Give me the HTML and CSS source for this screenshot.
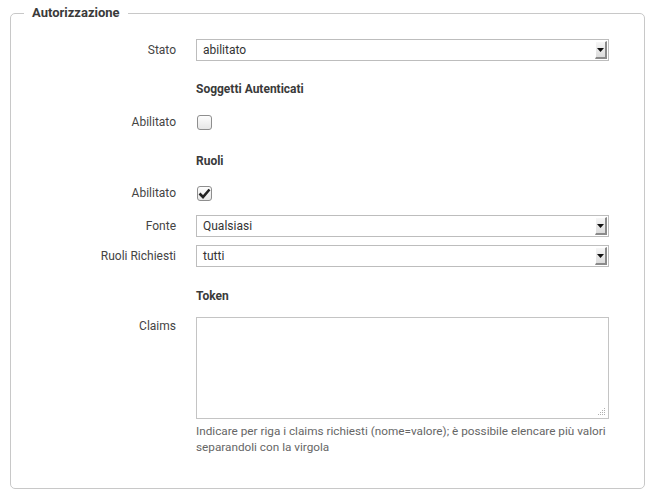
FILE: index.html
```html
<!DOCTYPE html>
<html lang="it">
<head>
<meta charset="utf-8">
<title>Autorizzazione</title>
<link rel="stylesheet" href="styles.css">
</head>
<body>
<fieldset class="box">
  <legend class="box-title">Autorizzazione</legend>

  <div class="row row-stato">
    <label class="lbl">Stato</label>
    <div class="select"><span class="select-value">abilitato</span><span class="select-btn"><svg width="7" height="4" viewBox="0 0 7 4"><path d="M0 0h7L3.5 4z" fill="#111"/></svg></span></div>
  </div>

  <div class="row row-head1">
    <span class="lbl"></span>
    <span class="section">Soggetti Autenticati</span>
  </div>

  <div class="row row-check1">
    <label class="lbl">Abilitato</label>
    <span class="check"></span>
  </div>

  <div class="row row-head2">
    <span class="lbl"></span>
    <span class="section">Ruoli</span>
  </div>

  <div class="row row-check2">
    <label class="lbl">Abilitato</label>
    <span class="check"><svg width="13" height="11" viewBox="0 0 13 11"><path d="M1.5 5.5 L5 9 L11.5 1.5" fill="none" stroke="#222" stroke-width="2.6"/></svg></span>
  </div>

  <div class="row row-fonte">
    <label class="lbl">Fonte</label>
    <div class="select"><span class="select-value">Qualsiasi</span><span class="select-btn"><svg width="7" height="4" viewBox="0 0 7 4"><path d="M0 0h7L3.5 4z" fill="#111"/></svg></span></div>
  </div>

  <div class="row row-ruoli">
    <label class="lbl">Ruoli Richiesti</label>
    <div class="select"><span class="select-value">tutti</span><span class="select-btn"><svg width="7" height="4" viewBox="0 0 7 4"><path d="M0 0h7L3.5 4z" fill="#111"/></svg></span></div>
  </div>

  <div class="row row-head3">
    <span class="lbl"></span>
    <span class="section">Token</span>
  </div>

  <div class="row row-claims">
    <label class="lbl lbl-top">Claims</label>
    <div class="field">
      <div class="area-wrap">
        <textarea class="area"></textarea>
        <svg class="grip" width="8" height="8" viewBox="0 0 8 8"><g fill="#b0b0b0"><rect x="6" y="0" width="1" height="1"/><rect x="4" y="2" width="1" height="1"/><rect x="6" y="2" width="1" height="1"/><rect x="2" y="4" width="1" height="1"/><rect x="4" y="4" width="1" height="1"/><rect x="6" y="4" width="1" height="1"/><rect x="0" y="6" width="1" height="1"/><rect x="2" y="6" width="1" height="1"/><rect x="4" y="6" width="1" height="1"/><rect x="6" y="6" width="1" height="1"/></g></svg>
      </div>
      <p class="help">Indicare per riga i claims richiesti (nome=valore); è possibile elencare più valori separandoli con la virgola</p>
    </div>
  </div>
</fieldset>
</body>
</html>
```

FILE: styles.css
```css
html, body {
  margin: 0;
  padding: 0;
  background: #fff;
}

body {
  font-family: Roboto, "Liberation Sans", sans-serif;
  font-size: 12px;
  color: #444;
  padding: 3px 12px 0 10px;
}

.box {
  margin: 0;
  border: 1px solid #c8c8c8;
  border-radius: 5px;
  padding: 16px 0 33px 0;
  width: 635px;
  box-sizing: border-box;
  min-width: 0;
}

.box-title {
  margin-left: 13px;
  padding: 0 8px;
  font-weight: bold;
  font-size: 13px;
  line-height: 20px;
  color: #3a3a3a;
}

.row {
  display: grid;
  grid-template-columns: 165px 413px;
  column-gap: 20px;
  align-items: center;
}

.lbl {
  text-align: right;
  line-height: 18px;
  color: #444;
}

.lbl-top {
  align-self: start;
}

.row-stato { height: 22px; }
.row-head1 { margin-top: 18px; height: 20px; }
.row-check1 { margin-top: 12px; height: 22px; }
.row-head2 { margin-top: 18px; height: 20px; }
.row-check2 { margin-top: 11px; height: 22px; }
.row-fonte { margin-top: 11px; height: 22px; }
.row-ruoli { margin-top: 8px; height: 22px; }
.row-head3 { margin-top: 19px; height: 20px; }
.row-claims { margin-top: 11px; align-items: start; }

.section {
  font-weight: bold;
  color: #3a3a3a;
  line-height: 20px;
}

.select {
  display: flex;
  align-items: stretch;
  height: 22px;
  box-sizing: border-box;
  border: 1px solid #bdbdbd;
  background: #fff;
}

.select-value {
  flex: 1;
  padding-left: 6px;
  line-height: 20px;
  font-size: 12px;
  color: #333;
}

.select-btn {
  width: 12px;
  margin: 1px 1px 1px 0;
  box-sizing: border-box;
  background: linear-gradient(#f6f6f6, #dcdcdc);
  border-right: 2px solid #8a8a8a;
  border-bottom: 2px solid #8a8a8a;
  border-top: 1px solid #fff;
  border-left: 1px solid #fff;
  display: flex;
  align-items: center;
  justify-content: center;
}

.check {
  width: 15px;
  height: 15px;
  box-sizing: border-box;
  border: 1px solid #8e8e8e;
  border-radius: 3px;
  background: linear-gradient(#fdfdfd, #e6e6e6);
  display: flex;
  align-items: center;
  justify-content: center;
  margin-left: 1px;
}

.field {
  display: flex;
  flex-direction: column;
}

.area-wrap {
  position: relative;
  width: 413px;
  height: 102px;
}

.area {
  display: block;
  width: 413px;
  height: 102px;
  box-sizing: border-box;
  border: 1px solid #c4c4c4;
  margin: 0;
  resize: none;
  font-family: inherit;
  font-size: 12px;
}

.grip {
  position: absolute;
  right: 3px;
  bottom: 3px;
}

.help {
  margin: 4px 0 0 0;
  width: 440px;
  font-size: 11.75px;
  line-height: 16px;
  color: #666;
}
```
